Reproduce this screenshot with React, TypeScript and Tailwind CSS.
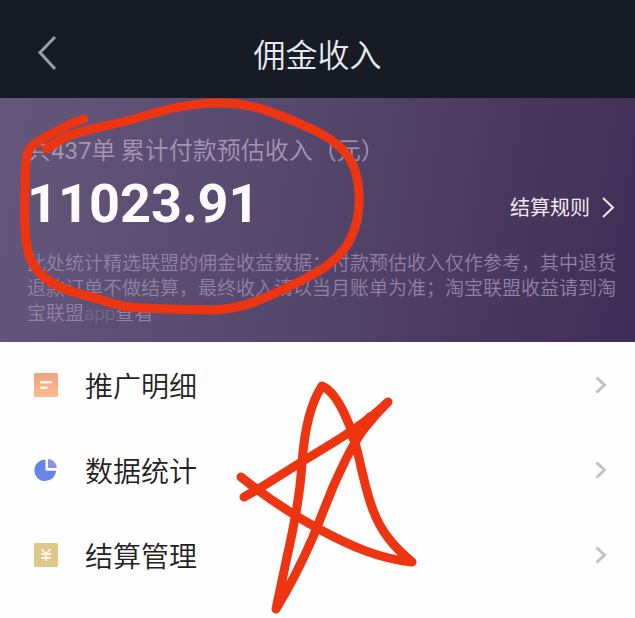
import React from 'react';

interface MenuItem {
  id: string;
  label: string;
  icon: React.ReactNode;
}

const DetailIcon: React.FC = () => (
  <svg viewBox="0 0 24 24" className="h-6 w-6" aria-hidden="true">
    <defs>
      <linearGradient id="detail-fill" x1="0" y1="0" x2="0" y2="1">
        <stop offset="0" stopColor="#f0a27c" />
        <stop offset="1" stopColor="#f8bd8e" />
      </linearGradient>
    </defs>
    <rect width="24" height="24" rx="1.5" fill="url(#detail-fill)" />
    <path d="M6 9.2h12M6 14.8h7.5" stroke="#fff3ea" strokeWidth="2.4" />
  </svg>
);

const StatsIcon: React.FC = () => (
  <svg viewBox="0 0 24 24" className="h-6 w-6" aria-hidden="true">
    <path d="M11.5 1.5A10.8 10.8 0 1 0 22 12.8H11.5z" fill="#6685e6" />
    <path d="M14 1a9.5 9.5 0 0 1 8.8 9H14z" fill="#8c91dd" />
  </svg>
);

const SettlementIcon: React.FC = () => (
  <svg viewBox="0 0 24 24" className="h-6 w-6" aria-hidden="true">
    <rect width="24" height="24" rx="1.5" fill="#dfc689" />
    <path d="M7.5 6l4.5 5 4.5-5M7 11.2h10M7 14.8h10M12 11v7" fill="none" stroke="#fffaf0" strokeWidth="1.8" />
  </svg>
);

const menuItems: MenuItem[] = [
  { id: 'detail', label: '推广明细', icon: <DetailIcon /> },
  { id: 'stats', label: '数据统计', icon: <StatsIcon /> },
  { id: 'settlement', label: '结算管理', icon: <SettlementIcon /> },
];

// Freehand marker strokes drawn over the page
const MarkerOverlay: React.FC = () => (
  <svg
    viewBox="0 0 635 618"
    className="pointer-events-none absolute left-0 top-0 h-[618px] w-[635px]"
    fill="none"
    stroke="#ee3512"
    strokeWidth="9"
    strokeLinecap="round"
    strokeLinejoin="round"
    aria-hidden="true"
  >
    <path d="M84 119C66 124 48 136 33 145C24 152 26 170 25 190C24 215 24 238 29 255C36 276 54 287 80 294C102 299 120 308 142 308C165 309 185 310 212 310C242 309 262 300 290 286C318 273 338 262 350 240C359 222 361 204 358 183C354 155 337 141 312 129C280 115 255 103 222 103C190 102 160 111 134 119C108 126 86 129 68 136C58 141 52 146 46 149" />
    <path d="M241 477C262 494 290 513 317 528C350 546 380 559 412 562C394 547 381 532 373 510C362 482 358 442 348 422C341 405 332 390 322 386C310 404 304 435 302 463C300 500 292 535 287 557L276 609C290 586 303 560 313 537L333 487C341 469 348 454 356 441C364 427 376 414 388 402C370 420 345 436 303 461L260 488L244 497" />
    <path d="M354 437L371 418" strokeWidth="12" />
  </svg>
);

const App: React.FC = () => {
  return (
    <div lang="zh-CN" className="relative min-h-screen overflow-hidden bg-[#fefefe] font-['Noto_Sans_CJK_SC',sans-serif]">
      <header className="grid h-[98px] grid-cols-[1fr_auto_1fr] items-center bg-[#171b23] px-9 pt-2">
        <button type="button" aria-label="返回" className="justify-self-start">
          <svg viewBox="0 0 22 36" className="h-9 w-[22px]" fill="none" stroke="#9b9da3" strokeWidth="3" aria-hidden="true">
            <path d="M19 2L4 17.5L19 34" />
          </svg>
        </button>
        <h1 className="text-[32px] leading-10 font-[350] text-[#e6e9f2]">佣金收入</h1>
      </header>

      <section className="bg-linear-100 from-[#64577b] via-[#56486c] via-45% to-[#402d55] px-[27px] pt-[34px] pb-4">
        <p className="text-2xl leading-[34px] font-[350] text-[#a595b4]">共<span className="font-['Roboto'] font-normal">437</span>单 累计付款预估收入（元）</p>
        <div className="flex items-center justify-between">
          <strong className="font-['Roboto'] text-[54px] leading-[72px] font-bold text-[#fdfbff]">11023.91</strong>
          <a href="#rules" className="-mr-2 flex items-center gap-[10px] pt-[6px] text-xl text-[#eeeaf3]">
            结算规则
            <svg viewBox="0 0 16 24" className="h-6 w-4" fill="none" stroke="currentColor" strokeWidth="2" aria-hidden="true">
              <path d="M3 3l10 9.5L3 22" />
            </svg>
          </a>
        </div>
        <p className="mt-[9px] -mr-5 text-[19px] leading-[25px] font-[350] text-[#9282a4]">
          此处统计精选联盟的佣金收益数据；付款预估收入仅作参考，其中退货退款订单不做结算，最终收入请以当月账单为准；淘宝联盟收益请到淘宝联盟<span className="font-['Roboto'] font-light text-[#796a8d]">app</span>查看
        </p>
      </section>

      <nav>
        <ul>
          {menuItems.map(item => (
            <li key={item.id}>
              <a href={`#${item.id}`} className="flex h-[85px] items-center px-[27px] pl-[34px]">
                {item.icon}
                <span className="ml-[27px] flex-1 text-[28px] leading-10 font-[350] text-[#222222]">{item.label}</span>
                <svg viewBox="0 0 14 20" className="h-5 w-[14px]" fill="none" stroke="#c2c2c2" strokeWidth="3" aria-hidden="true">
                  <path d="M2.5 2.5l8 7.5l-8 7.5" />
                </svg>
              </a>
            </li>
          ))}
        </ul>
      </nav>

      <MarkerOverlay />
    </div>
  );
};

export default App;
